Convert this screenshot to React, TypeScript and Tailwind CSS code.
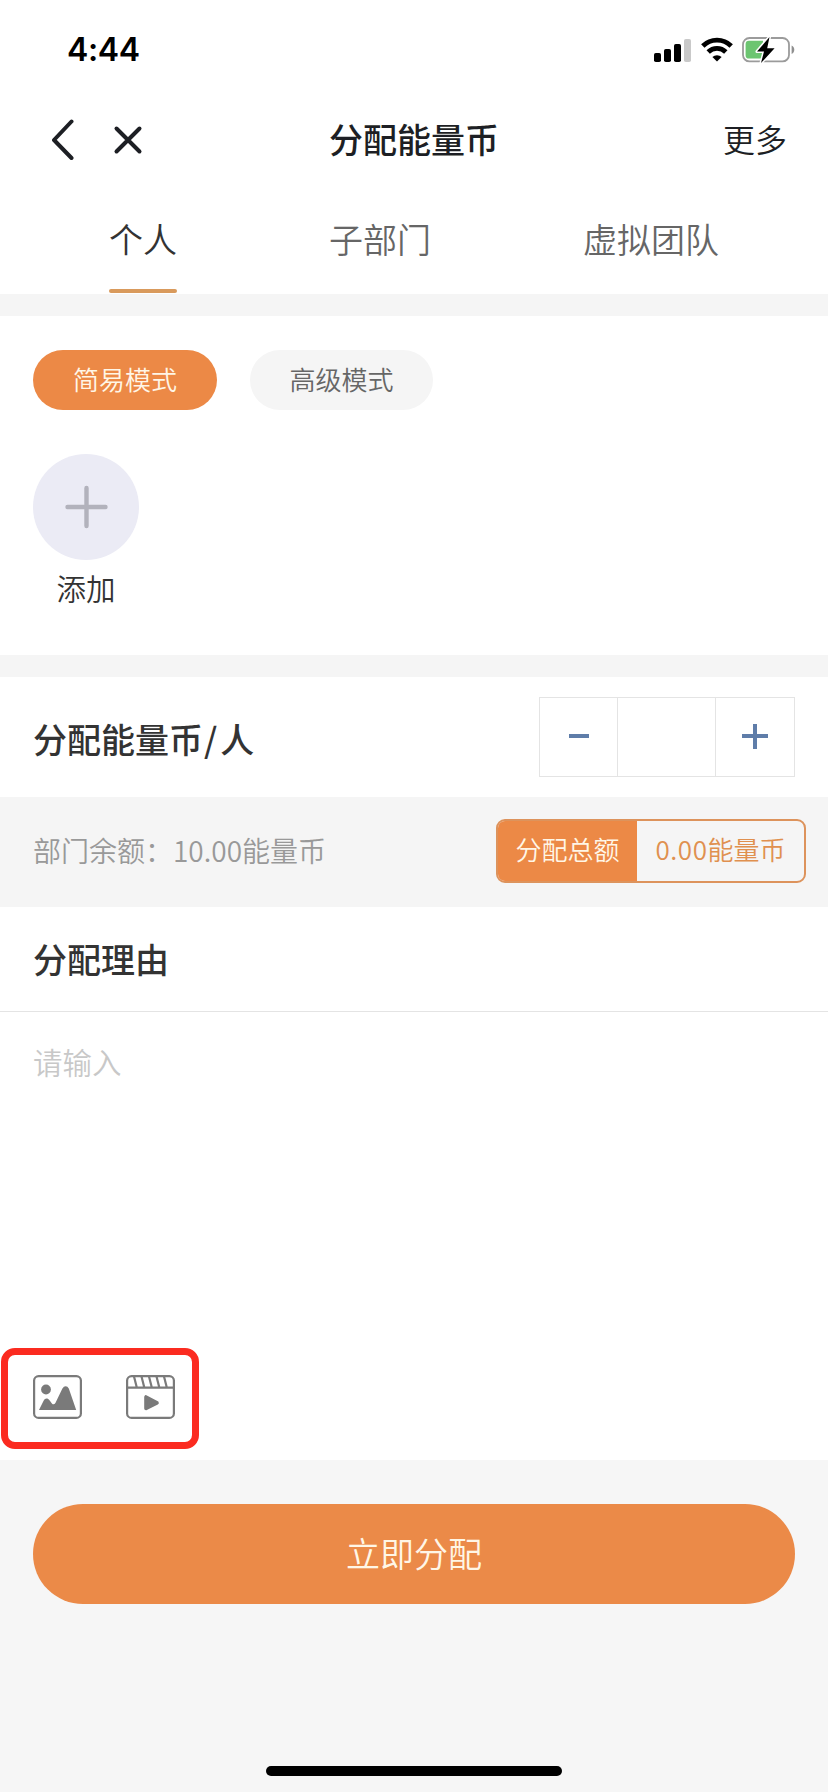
import { FC, ReactNode } from "react";

const tabs = ["个人", "子部门", "虚拟团队"];

const StatusBar: FC = () => {
  return (
    <div className="flex h-[98px] items-start justify-between pt-[30px] pl-[67px] pr-[32px]">
      <p className="font-['Inter'] text-[32px] leading-[40px] font-semibold tracking-[-0.4px] text-black">
        4:44
      </p>
      <div className="flex items-center pt-[6px]">
        <svg width="38" height="26" viewBox="0 0 38 26">
          <rect x="0" y="16" width="7" height="9" rx="1.8" />
          <rect x="10" y="12" width="7" height="13" rx="1.8" />
          <rect x="20" y="7" width="7" height="18" rx="1.8" />
          <rect x="30" y="2" width="7" height="23" rx="1.8" fill="#c9c9c9" />
        </svg>
        <svg
          className="ml-[9px]"
          width="32"
          height="26"
          viewBox="0 0 32 26"
          fill="none"
          stroke="#000"
          strokeWidth="4.8"
        >
          <path d="M1.8 9a20.2 20.2 0 0 1 28.4 0" />
          <path d="M7.2 15a12.6 12.6 0 0 1 17.6 0" />
          <path d="M16 24.6l-4.6-4.5a6.6 6.6 0 0 1 9.2 0z" fill="#000" stroke="none" />
        </svg>
        <svg className="ml-[9px]" width="54" height="28" viewBox="0 0 54 28">
          <rect x="1" y="2" width="46" height="23.4" rx="6.5" fill="#fff" stroke="#9b9b9b" strokeWidth="1.8" />
          <path d="M7 4.8h14v17.8H7a3.4 3.4 0 0 1-3.4-3.4V8.2A3.4 3.4 0 0 1 7 4.8z" fill="#6cc571" />
          <path d="M49.6 9.5c3.6 1.4 3.6 7 0 8.4z" fill="#8f8f8f" />
          <path
            d="M27.5 1L15 15.6h7L19 27 32.6 12.200h-7.400z"
            fill="#000"
            stroke="#fff"
            strokeWidth="3"
            paintOrder="stroke"
            strokeLinejoin="round"
          />
        </svg>
      </div>
    </div>
  );
};

const NavBar: FC = () => {
  return (
    <div className="grid h-[84px] grid-cols-3 items-center pl-[51px] pr-[41px] text-[#1d1f24]">
      <svg
        width="92"
        height="42"
        viewBox="0 0 92 42"
        fill="none"
        stroke="currentColor"
        strokeWidth="4"
        strokeLinecap="round"
        strokeLinejoin="round"
      >
        <path d="M20.5 2.5L3 21l17.5 18" />
        <path d="M65.5 9.5l23 23M88.5 9.5l-23 23" />
      </svg>
      <h1 className="-ml-[10px] pb-[3px] text-center text-[34px] leading-[48px] font-medium whitespace-nowrap">
        分配能量币
      </h1>
      <p className="pb-[4px] text-right text-[32px] leading-[48px]">更多</p>
    </div>
  );
};

const Tabs: FC = () => {
  return (
    <div className="flex h-[112px] justify-between pl-[109px] pr-[109px] text-[34px]">
      {tabs.map((tab, i) => (
        <div
          key={tab}
          className={i === 0 ? "flex flex-col text-[#333]" : "flex flex-col text-[#666]"}
        >
          <p className="pt-[32px] leading-[50px]">{tab}</p>
          {i === 0 && <div className="mt-[25px] h-[4px] rounded-[2px] bg-[#d99a5c]" />}
        </div>
      ))}
    </div>
  );
};

interface SectionTitleProps {
  children: ReactNode;
}
const SectionTitle: FC<SectionTitleProps> = ({ children }) => {
  return <h2 className="text-[34px] leading-[48px] font-medium text-[#333]">{children}</h2>;
};

const Gap: FC = () => <div className="h-[22px] bg-[#f5f5f5]" />;

const ImageIcon: FC = () => (
  <svg width="49" height="44" viewBox="0 0 49 44">
    <rect x="1.1" y="1.1" width="46.8" height="41.8" rx="4.5" fill="none" stroke="#7a7a7a" strokeWidth="2.2" />
    <circle cx="13" cy="14.5" r="4.9" fill="#7a7a7a" />
    <path
      d="M6 35l4.6-9.2c1.500-3 4.100-3 5.900-.6l2.400 3.200c1.200 1.400 2.500 1.200 3.500-.5l7-14.300c1.600-3.300 5-3.300 6.400 0L43.200 35z"
      fill="#7a7a7a"
    />
  </svg>
);

const VideoIcon: FC = () => (
  <svg width="49" height="44" viewBox="0 0 49 44" fill="none" stroke="#7a7a7a" strokeWidth="2.2">
    <rect x="1.1" y="1.1" width="46.8" height="41.8" rx="4.5" />
    <path d="M1 12.7h47M8 1.500l2.800 11M15.500 1.500l2.800 11M23 1.500l2.800 11M30.500 1.500l2.800 11M38 1.500l2.800 11" />
    <path
      d="M20 22v11.500l11-5.700z"
      fill="#7a7a7a"
      strokeWidth="3.6"
      strokeLinejoin="round"
    />
  </svg>
);

export default function App() {
  return (
    <div className="flex h-[1792px] w-[828px] flex-col bg-[#f6f6f6] font-['Noto_Sans_CJK_SC',sans-serif] font-[350]">
      <header className="bg-white">
        <StatusBar />
        <NavBar />
        <Tabs />
      </header>
      <Gap />

      <section className="h-[339px] bg-white px-[33px] pt-[34px]">
        <div className="flex gap-[33px] text-[26px] leading-[55px]">
          <button className="h-[60px] w-[184px] rounded-full bg-[#ec8946] pb-[4px] text-[#fff6e6]">简易模式</button>
          <button className="h-[60px] w-[183px] rounded-full bg-[#f5f5f5] pb-[4px] text-[#666]">高级模式</button>
        </div>
        <div className="mt-[44px] flex w-[106px] flex-col items-center">
          <div className="flex h-[106px] w-[106px] items-center justify-center rounded-full bg-[#ebebf5]">
            <svg width="44" height="44" viewBox="0 0 44 44" stroke="#b2b2bc" strokeWidth="4.4" strokeLinecap="round">
              <path d="M22.5 3v38M3.5 22h38" />
            </svg>
          </div>
          <p className="mt-[5px] text-[29.5px] leading-[44px] text-[#333]">添加</p>
        </div>
      </section>
      <Gap />

      <section className="flex h-[120px] items-start justify-between bg-white px-[33px]">
        <div className="pt-[38px]">
          <SectionTitle>
            分配能量币<span className="pl-px pr-[3px]">/</span>人
          </SectionTitle>
        </div>
        <div className="mt-[20px] flex h-[80px] w-[256px] border border-[#e4e4e4]">
          <button className="flex w-[78px] items-center justify-center border-r border-[#e4e4e4]">
            <svg width="20" height="20" viewBox="0 0 20 20" stroke="#5f7da9" strokeWidth="4">
              <path d="M0 9h20" />
            </svg>
          </button>
          <div className="w-[98px] border-r border-[#e4e4e4]" />
          <button className="flex flex-1 items-center justify-center">
            <svg width="26" height="26" viewBox="0 0 26 26" stroke="#5f7da9" strokeWidth="4">
              <path d="M0 12h26M13 -1v26" />
            </svg>
          </button>
        </div>
      </section>

      <section className="flex h-[110px] items-start justify-between bg-[#f5f5f5] pt-[22px] pl-[33px] pr-[22px]">
        <p className="text-[28px] leading-[62px] text-[#999]">部门余额：10.00能量币</p>
        <div className="flex h-[64px] w-[310px] overflow-hidden rounded-[9px] border-2 border-[#dd935c] text-[26px] leading-[56px]">
          <p className="w-[139px] bg-[#ec8946] text-center text-[#fff6e6]">分配总额</p>
          <p className="flex-1 text-center text-[#e0904f]">
            <span className="tracking-[0.6px]">0.00</span>能量币
          </p>
        </div>
      </section>

      <section className="flex h-[553px] flex-col bg-white">
        <div className="h-[105px] border-b border-[#e4e4e4] pt-[28px] pl-[33px]">
          <SectionTitle>分配理由</SectionTitle>
        </div>
        <p className="pt-[27px] pl-[33px] text-[29.5px] leading-[44px] text-[#c8c8c8]">请输入</p>
        <div className="mt-auto mb-[11px] ml-px flex h-[101px] w-[198px] items-start gap-[44px] rounded-[14px] border-[7px] border-[#fb2b20] pt-[20px] pl-[25px]">
          <ImageIcon />
          <VideoIcon />
        </div>
      </section>

      <footer className="flex flex-1 flex-col items-center px-[33px] pt-[44px]">
        <button className="h-[100px] w-full rounded-full bg-[#eb8a48] pb-[2px] text-[34px] leading-[98px] text-[#fff6e6]">
          立即分配
        </button>
        <div className="mt-auto mb-[16px] h-[10px] w-[296px] rounded-full bg-black" />
      </footer>
    </div>
  );
}
